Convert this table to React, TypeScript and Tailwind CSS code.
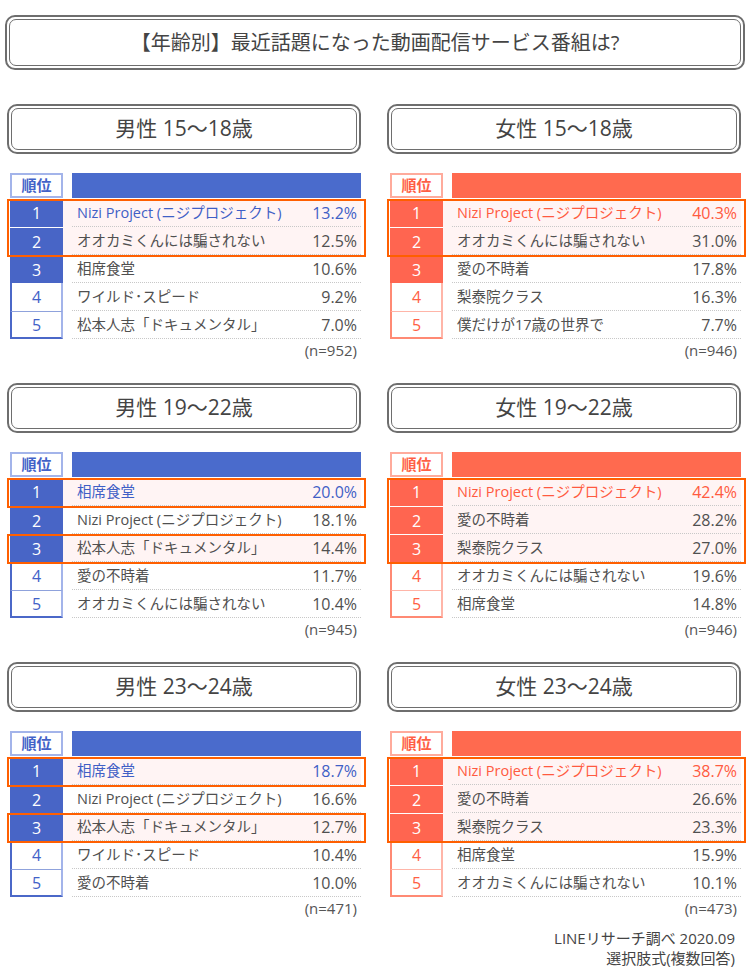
import type { ReactNode } from "react";

type Row = [string, string];

interface Panel {
  title: string;
  female: boolean;
  rows: Row[];
  n: string;
  // highlighted row groups: [first index, count]
  boxes: [number, number][];
}

const NIZI = "Nizi Project (ニジプロジェクト)";
const OOKAMI = "オオカミくんには騙されない";

const panels: Panel[] = [
  {
    title: "男性 15〜18歳",
    female: false,
    rows: [
      [NIZI, "13.2%"],
      [OOKAMI, "12.5%"],
      ["相席食堂", "10.6%"],
      ["ワイルド･スピード", "9.2%"],
      ["松本人志「ドキュメンタル」", "7.0%"],
    ],
    n: "(n=952)",
    boxes: [[0, 2]],
  },
  {
    title: "女性 15〜18歳",
    female: true,
    rows: [
      [NIZI, "40.3%"],
      [OOKAMI, "31.0%"],
      ["愛の不時着", "17.8%"],
      ["梨泰院クラス", "16.3%"],
      ["僕だけが17歳の世界で", "7.7%"],
    ],
    n: "(n=946)",
    boxes: [[0, 2]],
  },
  {
    title: "男性 19〜22歳",
    female: false,
    rows: [
      ["相席食堂", "20.0%"],
      [NIZI, "18.1%"],
      ["松本人志「ドキュメンタル」", "14.4%"],
      ["愛の不時着", "11.7%"],
      [OOKAMI, "10.4%"],
    ],
    n: "(n=945)",
    boxes: [
      [0, 1],
      [2, 1],
    ],
  },
  {
    title: "女性 19〜22歳",
    female: true,
    rows: [
      [NIZI, "42.4%"],
      ["愛の不時着", "28.2%"],
      ["梨泰院クラス", "27.0%"],
      [OOKAMI, "19.6%"],
      ["相席食堂", "14.8%"],
    ],
    n: "(n=946)",
    boxes: [[0, 3]],
  },
  {
    title: "男性 23〜24歳",
    female: false,
    rows: [
      ["相席食堂", "18.7%"],
      [NIZI, "16.6%"],
      ["松本人志「ドキュメンタル」", "12.7%"],
      ["ワイルド･スピード", "10.4%"],
      ["愛の不時着", "10.0%"],
    ],
    n: "(n=471)",
    boxes: [
      [0, 1],
      [2, 1],
    ],
  },
  {
    title: "女性 23〜24歳",
    female: true,
    rows: [
      [NIZI, "38.7%"],
      ["愛の不時着", "26.6%"],
      ["梨泰院クラス", "23.3%"],
      ["相席食堂", "15.9%"],
      [OOKAMI, "10.1%"],
    ],
    n: "(n=473)",
    boxes: [[0, 3]],
  },
];

function Frame({ className, children }: { className: string; children: ReactNode }) {
  return (
    <div className={`rounded-[10px] border-2 border-[#6e6e6e] p-[2px] ${className}`}>
      <div className="flex h-full items-center justify-center rounded-[7px] border border-[#6e6e6e] text-[#444]">
        {children}
      </div>
    </div>
  );
}

function RankTable({ panel }: { panel: Panel }) {
  const f = panel.female;
  const isBoxed = (i: number) => panel.boxes.some(([s, c]) => i >= s && i < s + c);

  return (
    <div className="relative ml-[3px] w-[351px]">
      <div className="flex h-[26px] gap-[9px]">
        <div
          className={`flex h-[25px] w-[53px] items-center justify-center border-2 text-[15px] font-bold ${
            f ? "border-[#ffab9c] text-[#ff5f45]" : "border-[#a3b4ea] text-[#4262c8]"
          }`}
        >
          順位
        </div>
        <div className={`h-[25px] flex-1 ${f ? "bg-[#ff6a4f]" : "bg-[#4a6bcc]"}`} />
      </div>

      {panel.rows.map(([name, pct], i) => {
        const filled = i < 3;
        const first = i === 0;
        const rankCls = filled
          ? `${f ? "bg-[#ff6550]" : "bg-[#4865c6]"} text-white ${i > 0 ? "border-t border-white" : ""}`
          : f
            ? `bg-white text-[#ff5f45] border-l-2 border-r-2 border-l-[#ff8a74] border-r-[#ffb5a8] ${
                i === 4 ? "border-t border-b-2 border-t-[#ffb5a8] border-b-[#ff8a74]" : ""
              }`
            : `bg-white text-[#4262c8] border-l-2 border-r-2 border-l-[#4b68c8] border-r-[#a3b4ea] ${
                i === 4 ? "border-t border-b-2 border-t-[#8fa2dc] border-b-[#4b68c8]" : ""
              }`;
        const textCls = first ? (f ? "text-[#ff5a40]" : "text-[#3f5fc6]") : "text-[#505050]";
        return (
          <div key={i} className="flex h-[28px]">
            <div className={`flex w-[53px] items-center justify-center text-[16px] ${rankCls}`}>{i + 1}</div>
            <div className={`flex-1 pl-[9px] ${isBoxed(i) ? "bg-[#fff4f4]" : ""}`}>
              <div
                className={`flex h-full items-center justify-between border-b border-dotted border-[#c8c8c8] pl-[5px] pr-[4px] ${textCls}`}
              >
                <span className="text-[14.5px]">{name}</span>
                <span className="text-[16px]">{pct}</span>
              </div>
            </div>
          </div>
        );
      })}

      {panel.boxes.map(([s, c]) => (
        <div
          key={s}
          className="pointer-events-none absolute left-[-3px] right-[-5px] border-2 border-[#ff5f00]"
          style={{ top: 26 + s * 28, height: c * 28 + 2 }}
        />
      ))}
    </div>
  );
}

export default function App() {
  return (
    <div
      className="w-[750px] bg-white pt-[15px] pb-[4px]"
      style={{ fontFamily: '"Open Sans", "Noto Sans CJK JP", sans-serif' }}
    >
      <Frame className="mx-[5px] h-[55px]">
        <span className="text-[20px]">【年齢別】最近話題になった動画配信サービス番組は?</span>
      </Frame>

      <div className="mt-[34px] grid grid-cols-[355px_355px] gap-x-[25px] gap-y-[24px] pl-[7px]">
        {panels.map((p) => (
          <div key={p.title}>
            <Frame className="h-[50px] w-[354px]">
              <span className="text-[21px]">{p.title}</span>
            </Frame>
            <div className="mt-[19px]">
              <RankTable panel={p} />
            </div>
            <div className="h-[20px] w-[354px] pr-[4px] text-right text-[15px] leading-[22px] text-[#555]">{p.n}</div>
          </div>
        ))}
      </div>

      <div className="mt-[11px] pr-[15px] text-right text-[15px] leading-[20px] text-[#444]">
        <div>LINEリサーチ調べ 2020.09</div>
        <div>選択肢式(複数回答)</div>
      </div>
    </div>
  );
}
